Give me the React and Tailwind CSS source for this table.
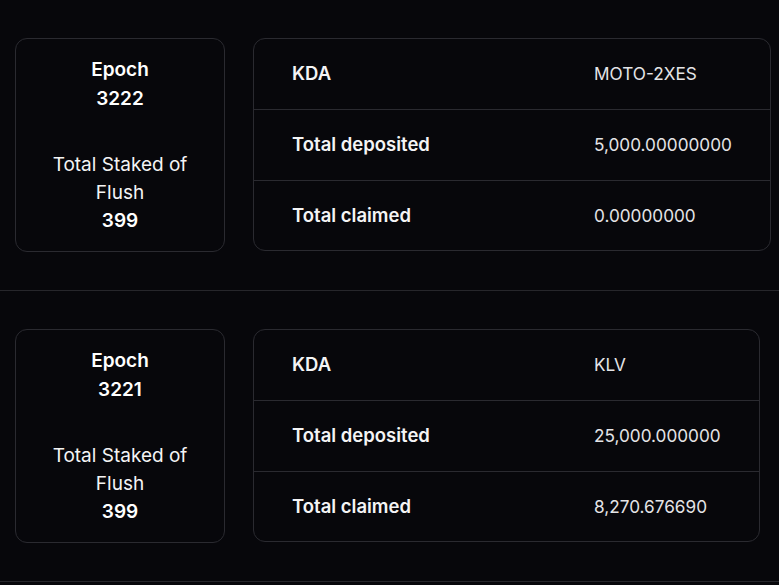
import React from "react";

const data = [
  {
    epoch: "3222",
    staked: "399",
    token: "MOTO-2XES",
    deposited: "5,000.00000000",
    claimed: "0.00000000",
  },
  {
    epoch: "3221",
    staked: "399",
    token: "KLV",
    deposited: "25,000.000000",
    claimed: "8,270.676690",
  },
];

function Row({ label, value, last }) {
  return (
    <div
      className={
        "flex items-center " +
        (last ? "h-[69px]" : "h-[71px] border-b border-[#2a2a30]")
      }
    >
      <div className="w-[340px] pl-[38px] font-semibold text-[18.5px] text-[#f4f4f5]">{label}</div>
      <div className="pr-[38px] text-[17.2px] text-[#e4e4e7]">{value}</div>
    </div>
  );
}

export default function App() {
  return (
    <div
      className="min-h-[585px] bg-[#07070b] text-white text-[18px]"
      style={{ fontFamily: "Inter, 'Noto Sans', sans-serif" }}
    >
      {data.map((d) => (
        <div key={d.epoch} className="border-b border-[#26262b] px-[15px] py-[38px] flex items-start gap-[28px]">
          <div className="w-[210px] shrink-0 rounded-[12px] border border-[#2a2a30] pt-[17px] pb-[16px] px-[20px] flex flex-col items-center text-center leading-[28px] text-[19px]">
            <div className="font-semibold">Epoch</div>
            <div className="font-semibold mt-[1px]">{d.epoch}</div>
            <div className="mt-[38px] text-[#f4f4f5]">Total Staked of Flush</div>
            <div className="font-semibold">{d.staked}</div>
          </div>
          <div className="rounded-[12px] border border-[#2a2a30] flex flex-col">
            <Row label="KDA" value={d.token} />
            <Row label="Total deposited" value={d.deposited} />
            <Row label="Total claimed" value={d.claimed} last />
          </div>
        </div>
      ))}
    </div>
  );
}
